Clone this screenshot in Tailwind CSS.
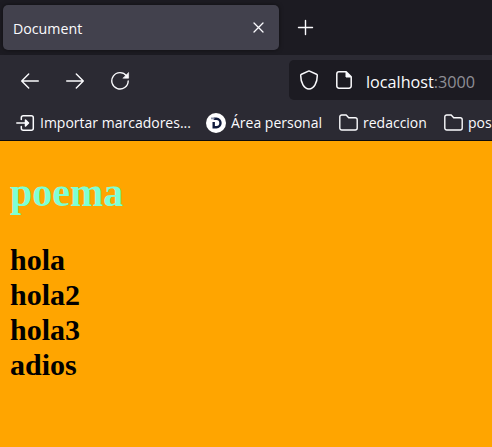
<!DOCTYPE html>
<html lang="es">
<head>
<meta charset="utf-8">
<title>Document</title>
<script src="https://cdn.jsdelivr.net/npm/@tailwindcss/browser@4"></script>
</head>
<body class="w-[492px] h-[447px] overflow-hidden flex flex-col bg-[#ffa500] font-['Open_Sans','Noto_Sans',sans-serif] text-[#fbfbfe]">
<header class="shrink-0 bg-[#2b2a33] border-b border-[#0c0c0d] h-[141px] flex flex-col overflow-hidden">
  <div class="h-[55px] shrink-0 bg-[#1c1b22] flex items-start pt-[5px] pl-[3px]">
    <div class="w-[276px] h-[45px] rounded-[5px] bg-[#42414d] shadow-[0_0_4px_rgba(0,0,0,0.5)] flex items-center justify-between pl-[10px] pr-[15px]">
      <span class="text-[14.2px] leading-5 pt-[2px]">Document</span>
      <svg class="size-[11px]" viewBox="0 0 11 11" fill="none" stroke="currentColor" stroke-width="1.3" stroke-linecap="round"><path d="M1 1l9 9M10 1l-9 9"/></svg>
    </div>
    <svg class="size-[17px] ml-[18px] mt-[14px]" viewBox="0 0 17 17" fill="none" stroke="currentColor" stroke-width="1.4" stroke-linecap="round"><path d="M8.5 1.5v14M1.5 8.5h14"/></svg>
  </div>
  <div class="h-[50px] shrink-0 flex items-center pl-[20px]">
    <svg class="size-5" viewBox="0 0 20 20" fill="none" stroke="currentColor" stroke-width="1.4" stroke-linecap="round" stroke-linejoin="round"><path d="M18.3 11H2M8.7 4L1.7 11l7 7"/></svg>
    <svg class="size-5 ml-[25px]" viewBox="0 0 20 20" fill="none" stroke="currentColor" stroke-width="1.4" stroke-linecap="round" stroke-linejoin="round"><path d="M1.7 11H18M11.3 4l7 7l-7 7"/></svg>
    <svg class="size-5 ml-[25px]" viewBox="0 0 20 20" fill="none" stroke="currentColor" stroke-width="1.4" stroke-linecap="round"><path d="M16.500 5.800A8.200 8.200 0 1 0 18.200 11"/><path d="M18.600 2.800v5.400h-5.400z" fill="currentColor" stroke-width=".6" stroke-linejoin="round"/></svg>
    <div class="ml-[159px] w-[203px] h-10 shrink-0 rounded-l-[5px] bg-[#1c1b22] flex items-center pl-[10px]">
      <svg class="size-5" viewBox="0 0 20 20" fill="none" stroke="currentColor" stroke-width="1.5" stroke-linejoin="round"><path d="M10 .9L17.5 4.200Q18.300 4.600 18.300 5.500C18.300 12.500 15 18.900 10 18.900S1.700 12.500 1.700 5.500Q1.700 4.600 2.500 4.200Z"/></svg>
      <svg class="w-4 h-[18px] ml-[17px]" viewBox="0 0 16 18" fill="none" stroke="currentColor" stroke-width="1.5" stroke-linejoin="round"><path d="M3 .8h7.200l5 5V15a2.200 2.200 0 0 1-2.200 2.200H3A2.200 2.200 0 0 1 .8 15V3A2.200 2.200 0 0 1 3 .8z"/><path d="M10 1v5h5z" fill="currentColor" stroke-width="1"/></svg>
      <span class="ml-[14px] text-[16.2px] leading-6 pt-[3px]">localhost<span class="text-[#8f8f96]">:3000</span></span>
    </div>
  </div>
  <nav class="h-[35px] shrink-0 flex items-center pl-[16px] whitespace-nowrap text-[14px] leading-5">
    <svg class="w-[19px] h-4 shrink-0" viewBox="0 0 19 16" fill="none" stroke="currentColor" stroke-width="1.500" stroke-linecap="round" stroke-linejoin="round"><path d="M5.300 4.500V2.800a2 2 0 0 1 2-2h8a2 2 0 0 1 2 2v10.400a2 2 0 0 1-2 2h-8a2 2 0 0 1-2-2V11.500M.8 8H10"/><path d="M9.500 5L12.500 8l-3 3z" fill="currentColor"/></svg>
    <span class="ml-[5px] w-[151px] pt-px">Importar marcadores...</span>
    <svg class="size-5 ml-[15px] shrink-0" viewBox="0 0 20 20"><circle cx="10" cy="10" r="10" fill="#fff"/><path d="M7.700 5.800H10.500a4 4.200 0 0 1 0 8.400H7.700V9" fill="none" stroke="#101a3c" stroke-width="2.400"/><path d="M5 5.400h3.500" stroke="#8c92a8" stroke-width="1.800"/></svg>
    <span class="ml-[5px] w-[92px] pt-px">Área personal</span>
    <svg class="w-[19px] h-[17px] ml-[16px] shrink-0" viewBox="0 0 19 17" fill="none" stroke="currentColor" stroke-width="1.400" stroke-linejoin="round"><path d="M2.800 1h4.400l2.500 2.800h6.500a2 2 0 0 1 2 2V14a2 2 0 0 1-2 2H2.800a2 2 0 0 1-2-2V3a2 2 0 0 1 2-2z"/></svg>
    <span class="ml-[5px] w-[65px] pt-px">redaccion</span>
    <svg class="w-[19px] h-[17px] ml-[16px] shrink-0" viewBox="0 0 19 17" fill="none" stroke="currentColor" stroke-width="1.400" stroke-linejoin="round"><path d="M2.800 1h4.400l2.500 2.800h6.500a2 2 0 0 1 2 2V14a2 2 0 0 1-2 2H2.800a2 2 0 0 1-2-2V3a2 2 0 0 1 2-2z"/></svg>
    <span class="ml-[5px] pt-px">pos</span>
  </nav>
</header>
<main class="pl-[10px] pt-[29px] font-['Liberation_Serif',serif] font-bold">
  <h1 class="text-[40px] leading-[46px] text-[#7fffd4]">poema</h1>
  <h2 class="mt-[26px] text-[30px] leading-[35px] text-black">hola<br>hola2<br>hola3<br>adios</h2>
</main>
</body>
</html>
